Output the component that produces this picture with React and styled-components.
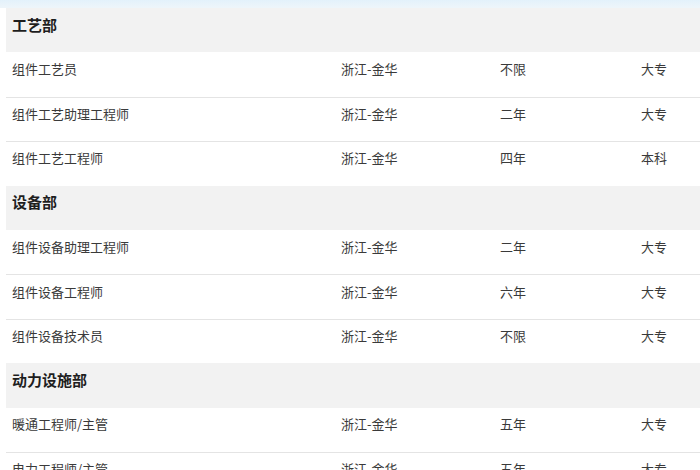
import React from "react";
import styled, { createGlobalStyle } from "styled-components";

const GlobalStyle = createGlobalStyle`
  html, body {
    margin: 0;
    padding: 0;
    background: #ffffff;
  }
  body {
    font-family: "Noto Sans CJK SC", "Noto Sans", sans-serif;
    overflow: hidden;
  }
`;

const Page = styled.div`
  width: 700px;
  height: 470px;
  overflow: hidden;
  background: #ffffff;
`;

const TopStrip = styled.div`
  height: 8px;
  background: linear-gradient(to bottom, #e3f1fb, #eef5fa);
`;

const Table = styled.div`
  margin-left: 6px;
  display: flex;
  flex-direction: column;
`;

const SectionRow = styled.div`
  height: 44.4px;
  box-sizing: border-box;
  background: #f2f2f2;
  display: flex;
  align-items: center;
  padding: 0 6px 12px;
  font-size: 15px;
  font-weight: 700;
  color: #1e1e1e;
`;

const Row = styled.div`
  height: 44.4px;
  box-sizing: border-box;
  display: grid;
  grid-template-columns: 329px 159px 141px 1fr;
  align-items: center;
  padding: 0 6px 12px;
  border-top: ${(p) => (p.$first ? "none" : "1px solid #e4e4e4")};
  font-size: 13px;
  color: #3a3a3a;
`;

const Cell = styled.span`
  white-space: nowrap;
`;

const sections = [
  {
    name: "工艺部",
    rows: [
      ["组件工艺员", "浙江-金华", "不限", "大专"],
      ["组件工艺助理工程师", "浙江-金华", "二年", "大专"],
      ["组件工艺工程师", "浙江-金华", "四年", "本科"],
    ],
  },
  {
    name: "设备部",
    rows: [
      ["组件设备助理工程师", "浙江-金华", "二年", "大专"],
      ["组件设备工程师", "浙江-金华", "六年", "大专"],
      ["组件设备技术员", "浙江-金华", "不限", "大专"],
    ],
  },
  {
    name: "动力设施部",
    rows: [
      ["暖通工程师/主管", "浙江-金华", "五年", "大专"],
      ["电力工程师/主管", "浙江-金华", "五年", "大专"],
    ],
  },
];

export default function App() {
  return (
    <Page>
      <GlobalStyle />
      <TopStrip />
      <Table>
        {sections.map((s) => (
          <React.Fragment key={s.name}>
            <SectionRow>{s.name}</SectionRow>
            {s.rows.map((r, i) => (
              <Row key={r[0]} $first={i === 0}>
                {r.map((c, j) => (
                  <Cell key={j}>{c}</Cell>
                ))}
              </Row>
            ))}
          </React.Fragment>
        ))}
      </Table>
    </Page>
  );
}
